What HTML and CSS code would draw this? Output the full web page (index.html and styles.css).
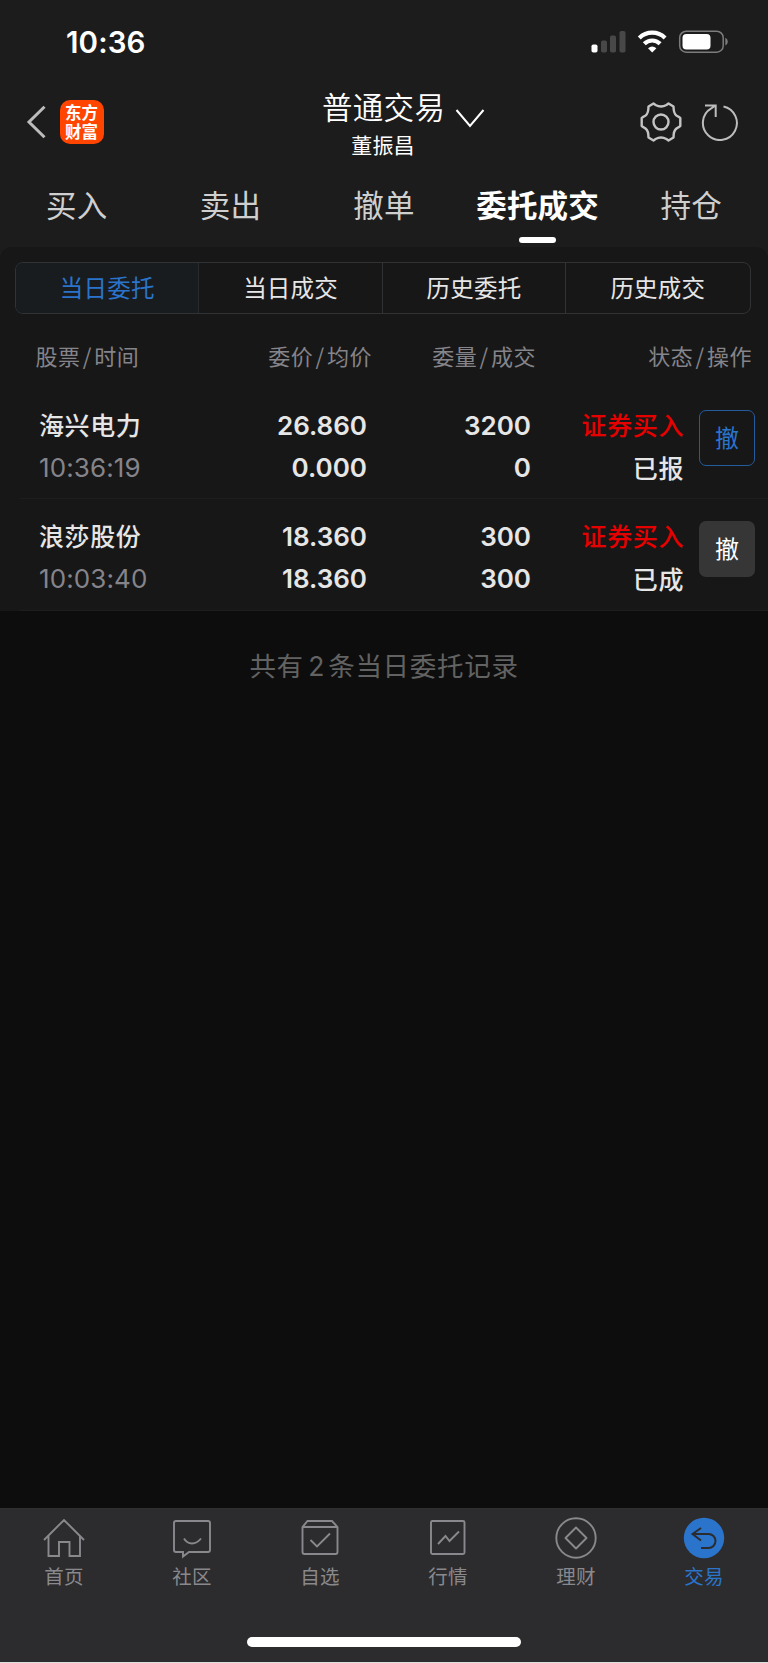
FILE: index.html
```html
<!DOCTYPE html>
<html lang="zh-CN">
<head>
<meta charset="utf-8">
<title>普通交易</title>
<link rel="stylesheet" href="styles.css">
</head>
<body>
<div class="app">
  <div class="status-bar">
    <span class="clock">10:36</span>
    <svg class="status-icons" width="140" height="26" viewBox="0 0 140 26">
      <rect x="0.5" y="15.5" width="6" height="8" rx="1.8" fill="#fff"/>
      <g fill="#484848"><rect x="10" y="11.5" width="6" height="12" rx="1.8"/><rect x="19" y="6.500" width="6" height="17" rx="1.8"/><rect x="28.500" y="2" width="6" height="21.500" rx="1.8"/></g>
      <g fill="none" stroke="#fff" stroke-width="4.200"><path d="M48.300 8.900A18.500 18.500 0 0 1 74.100 8.900"/><path d="M53.300 14.700A11.300 11.300 0 0 1 69.100 14.700"/></g>
      <path d="M57 19.200Q61.200 16 65.400 19.200L61.200 23.600Z" fill="#fff"/>
      <rect x="88.700" y="2.200" width="43.500" height="21" rx="6.500" fill="none" stroke="#7c7c7c" stroke-width="1.500"/>
      <rect x="91.500" y="5" width="28" height="15.500" rx="3.800" fill="#fff"/>
      <path d="M134.300 8.800Q136.800 10 136.800 12.700T134.300 16.600Z" fill="#7c7c7c"/>
    </svg>
  </div>

  <header class="header">
    <div class="brand">
      <svg width="20" height="34" viewBox="0 0 20 34" fill="none" stroke="#bcbcbc" stroke-width="3"><path d="M18.500 1.800L3 17L18.500 32.200"/></svg>
      <div class="logo"><span>东方</span><span>财富</span></div>
    </div>
    <div class="account">
      <div class="account-title">普通交易</div>
      <div class="account-name">董振昌</div>
    </div>
    <svg class="chevron" width="30" height="20" viewBox="0 0 30 20" fill="none" stroke="#fff" stroke-width="2"><path d="M1.500 1L15 17L28.500 1"/></svg>
    <div class="tools">
      <svg width="42" height="42" viewBox="-21 -21 42 42" fill="none" stroke="#c4c4c4" stroke-width="2.400" stroke-linejoin="round">
        <path d="M-12.500 -15.500L-7.500 -18.500L-5.400 -17Q0 -13.900 5.400 -17L7.500 -18.500L12.500 -15.500L12.700 -12.500Q13.200 -7 17.300 -5.400L19.300 -4V4L17.300 5.400Q13.200 7 12.700 12.500L12.500 15.500L7.500 18.500L5.400 17Q0 13.900 -5.400 17L-7.500 18.500L-12.500 15.500L-12.700 12.500Q-13.200 7 -17.300 5.400L-19.300 4V-4L-17.300 -5.400Q-13.200 -7 -12.700 -12.500Z"/>
        <circle r="7.500"/>
      </svg>
      <svg width="38" height="38" viewBox="0 0 38 38" fill="none" stroke="#bcbcbc" stroke-width="2"><path d="M22.500 3.400A17 17 0 1 1 10.200 5.400L14.500 2.500M4 2.500H14.700V14"/></svg>
    </div>
  </header>

  <nav class="tabs">
    <a>买入</a><a>卖出</a><a>撤单</a><a class="current">委托成交</a><a>持仓</a>
  </nav>

  <main class="panel">
    <div class="segments">
      <span class="selected">当日委托</span><span>当日成交</span><span>历史委托</span><span>历史成交</span>
    </div>
    <div class="columns">
      <span>股票<i>/</i>时间</span><span>委价<i>/</i>均价</span><span>委量<i>/</i>成交</span><span>状态<i>/</i>操作</span>
    </div>
    <section class="order">
      <div class="stock"><b>海兴电力</b><time>10:36:19</time></div>
      <div class="figures"><span>26.860</span><span>0.000</span></div>
      <div class="figures"><span>3200</span><span>0</span></div>
      <div class="state"><b class="buy">证券买入</b><b>已报</b></div>
      <button class="cancel active">撤</button>
    </section>
    <section class="order">
      <div class="stock"><b>浪莎股份</b><time>10:03:40</time></div>
      <div class="figures"><span>18.360</span><span>18.360</span></div>
      <div class="figures"><span>300</span><span>300</span></div>
      <div class="state"><b class="buy">证券买入</b><b>已成</b></div>
      <button class="cancel">撤</button>
    </section>
  </main>
  <p class="summary">共有<span>2</span>条当日委托记录</p>

  <footer class="dock">
    <nav class="dock-items">
      <a><svg viewBox="0 0 44 44"><path d="M2 23L22 3L42 23M6.500 19V39H17V25H27.500V39H38V19"/></svg>首页</a>
      <a><svg viewBox="0 0 44 44"><path d="M6 4H38Q40 4 40 6V33Q40 35 38 35H19L13 39.500V35H6Q4 35 4 33V6Q4 4 6 4ZM14 21.500Q17 26.500 22 26.500T31 21.500"/></svg>社区</a>
      <a><svg viewBox="0 0 44 44"><path d="M4.500 10L9.500 4H34L39.500 10V35Q39.500 37 37.500 37H6.500Q4.500 37 4.500 35ZM4.500 10H39.500M12.500 23L19 29.500L32 16.500"/></svg>自选</a>
      <a><svg viewBox="0 0 44 44"><rect x="5" y="4" width="33.500" height="33" rx="1.500"/><path d="M12 27L19.500 19L23.500 24L33 14.500"/></svg>行情</a>
      <a><svg viewBox="0 0 44 44"><circle cx="22" cy="21" r="19.700"/><path d="M22 10.500L32.500 21L22 31.500L11.500 21Z" stroke-linejoin="round"/></svg>理财</a>
      <a class="current"><svg viewBox="0 0 44 44"><circle cx="22" cy="21" r="20.200" fill="#2a74cb" stroke="none"/><path d="M19 11L10.500 17L19 23.500M11 17H26.500A7 7 0 0 1 26.500 31H19" stroke="#2c2c2e" stroke-width="2"/></svg>交易</a>
    </nav>
    <div class="home-indicator"></div>
  </footer>
</div>
</body>
</html>
```
FILE: styles.css
```css
* { box-sizing: border-box; }
body { margin: 0; background: #0d0d0d; }
.app {
  width: 768px; height: 1663px;
  display: flex; flex-direction: column;
  background: linear-gradient(#1c1c1c 0 260px, #0d0d0d 260px);
  color: #e6e6e6;
  font-family: "Noto Sans CJK SC", sans-serif;
}
.status-bar { height: 84px; display: flex; justify-content: space-between; padding: 29px 34px 0 66px; }
.clock { font: 600 29.500px/27px Inter, sans-serif; color: #fff; letter-spacing: 0.1px; }
.status-icons { margin-right: 3px; }

.header { height: 86px; display: grid; grid-template-columns: 322px 122px 1fr auto; padding-right: 29px; }
.brand { display: flex; align-items: center; gap: 13.500px; padding: 0 0 10px 26px; height: 86px; }
.logo {
  width: 44px; height: 44px; border-radius: 10px; background: #ff4500; color: #fff;
  display: flex; flex-direction: column; align-items: center; justify-content: center;
  font-size: 16.500px; font-weight: 700; line-height: 19px; padding-bottom: 1px;
}
.account { text-align: center; color: #fff; white-space: nowrap; }
.account-title { font-size: 30.500px; letter-spacing: 0.3px; line-height: 44px; margin-top: 0; font-weight: 350; }
.account-name { font-size: 21px; letter-spacing: 0.2px; line-height: 32px; margin-top: 0; }
.chevron { margin: 25px 0 0 11px; }
.tools { display: flex; align-items: center; gap: 19px; height: 77px; margin-top: -1px; }

.tabs { height: 77px; display: grid; grid-template-columns: repeat(5, 1fr); }
.tabs a {
  display: flex; flex-direction: column; align-items: center;
  padding-top: 9px; font-size: 30.500px; line-height: 50px; letter-spacing: 0.2px; color: #cfcfcf;
}
.tabs .current { color: #fff; font-weight: 700; }
.tabs .current::after { content: ""; width: 37px; height: 6px; margin-top: 8px; border-radius: 3px; background: #fff; }

.panel { height: 364px; background: #171717; border-radius: 12px 12px 0 0; padding-top: 15px; }
.segments {
  height: 52px; margin: 0 17.500px 0 15px; display: grid; grid-template-columns: repeat(4, 1fr);
  border: 1px solid #303234; border-radius: 8px; overflow: hidden;
}
.segments span {
  display: flex; align-items: center; justify-content: center;
  font-size: 23.500px; letter-spacing: 0.2px; border-right: 1px solid #303234; padding-bottom: 2px;
}
.segments span:last-child { border-right: 0; }
.segments .selected { background: #191c1f; color: #2a74cb; border-right-color: #252a2e; }
.columns {
  height: 78px; display: grid; grid-template-columns: 220px 152px 164px 1fr;
  padding: 19px 16px 0 0; font-size: 22px; line-height: 44px; color: #85848a; text-align: right; letter-spacing: 0.5px;
}
.columns span:first-child { text-align: left; padding-left: 35.500px; }
.columns i { font-style: normal; margin: 0 2.300px; }

.order {
  height: 112px; margin-left: 20px; padding-top: 15px; border-bottom: 1px solid #1e1e1f;
  display: grid; grid-template-columns: 195px 152px 164px 153px 56px; align-items: start;
}
.columns + .order { height: 107px; padding-top: 11px; }
.order > div { display: flex; flex-direction: column; line-height: 42.500px; }
.stock { padding-left: 19px; }
.order b { font-size: 25px; letter-spacing: 0.6px; font-weight: 500; }
.order time { font: 400 26px/42.5px Inter, sans-serif; color: #85848a; padding-top: 1px; letter-spacing: 0.1px; }
.order .figures { font-family: Inter, sans-serif; font-size: 26px; font-weight: 600; text-align: right; padding-top: 1.500px; }
.state { text-align: right; }
.order .buy { color: #e60000; }
.cancel {
  width: 56px; height: 56px; margin: 7px 0 0 15px; padding: 0 0 2px; border: 0; border-radius: 7px;
  background: #363636; color: #fff; font: 400 24px/54px "Noto Sans CJK SC", sans-serif;
}
.cancel.active { background: transparent; border: 1.500px solid #245b9c; color: #2a74cb; line-height: 50px; }
.summary { margin: 32px 0 0; text-align: center; font-size: 26.500px; line-height: 44px; letter-spacing: 0.7px; color: #626262; }
.summary span { margin: 0 3px 0 4.500px; font-family: Inter, sans-serif; }

.dock { height: 155px; margin-top: auto; background: #2c2c2e; border-top: 1px solid #303032; border-bottom: 1px solid #dedede; }
.dock-items { height: 128px; display: grid; grid-template-columns: repeat(6, 1fr); }
.dock-items a { display: flex; flex-direction: column; align-items: center; padding-top: 8px; color: #89898d; font-size: 19.500px; line-height: 30px; letter-spacing: 0.3px; }
.dock-items svg { width: 44px; height: 44px; fill: none; stroke: #89898d; stroke-width: 1.900px; }
.dock-items .current { color: #2a74cb; }
.home-indicator { width: 274px; height: 10px; margin: 0 auto; border-radius: 5px; background: #fff; }
```
